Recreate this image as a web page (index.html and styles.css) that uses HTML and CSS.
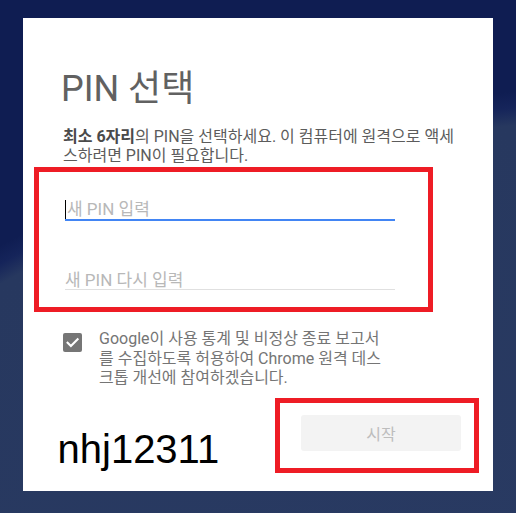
FILE: index.html
```html
<!DOCTYPE html>
<html lang="ko">
<head>
<meta charset="utf-8">
<title>PIN 선택</title>
<link rel="stylesheet" href="styles.css">
</head>
<body>
  <main class="card">
    <h1 class="title">PIN 선택</h1>
    <p class="desc"><b>최소 6자리</b>의 PIN을 선택하세요. 이 컴퓨터에 원격으로 액세스하려면 PIN이 필요합니다.</p>
    <div class="fields">
      <div class="field field-focused"><span class="caret"></span><span class="placeholder">새 PIN 입력</span></div>
      <div class="field"><span class="placeholder">새 PIN 다시 입력</span></div>
    </div>
    <label class="consent">
      <span class="checkbox">
        <svg viewBox="0 0 19 19" width="19" height="19" aria-hidden="true"><path d="M4.6 9.8 L7.9 13 L14.6 6.2" fill="none" stroke="#fff" stroke-width="2.1" stroke-linecap="square"/></svg>
      </span>
      <span class="consent-text">Google이 사용 통계 및 비정상 종료 보고서를 수집하도록 허용하여 Chrome 원격 데스크톱 개선에 참여하겠습니다.</span>
    </label>
    <div class="footer">
      <div class="pin-note">nhj12311</div>
      <button class="start" type="button">시작</button>
    </div>
  </main>
  <div class="mark mark-fields"></div>
  <div class="mark mark-button"></div>
</body>
</html>
```
FILE: styles.css
```css
html, body {
  margin: 0;
  padding: 0;
}
body {
  width: 516px;
  height: 513px;
  overflow: hidden;
  position: relative;
  font-family: Roboto, "Noto Sans CJK KR", sans-serif;
  background-color: #0f1d52;
  background-image: radial-gradient(circle 1278px at 622px 1387px, #2c3e68 0px, #27385f 1266px, #15245a 1284px, #0f1d52 1300px);
}
.card {
  box-sizing: border-box;
  width: 470px;
  height: 473px;
  margin: 18px 0 0 23px;
  padding: 49px 32px 0 40px;
  background: #fff;
  display: flex;
  flex-direction: column;
}
.title {
  margin: 0 0 0 -2px;
  font-size: 36px;
  line-height: 44px;
  font-weight: 400;
  color: #616161;
}
.desc {
  margin: 16px -6px 0 0;
  font-size: 16px;
  line-height: 19px;
  color: #5c5c5c;
}
.desc b {
  font-weight: 700;
  color: #4a4a4a;
}
.fields {
  margin: 34.5px 0 0 2px;
  width: 330px;
  display: flex;
  flex-direction: column;
  gap: 50px;
}
.field {
  font-size: 17px;
  line-height: 18px;
  border-bottom: 1px solid #e0e0e0;
  display: flex;
  align-items: center;
}
.field-focused {
  border-bottom: 2px solid #4285f4;
}
.caret {
  width: 1px;
  height: 19px;
  background: #000;
  margin-right: 1px;
}
.placeholder {
  color: #b8b8b8;
}
.consent {
  margin-top: 39.5px;
  display: flex;
  align-items: flex-start;
  gap: 17px;
}
.checkbox {
  flex: none;
  width: 19px;
  height: 19px;
  margin-top: 4px;
  border-radius: 2px;
  background: #767676;
  display: flex;
}
.consent-text {
  width: 290px;
  font-size: 16px;
  line-height: 19.5px;
  color: #757575;
}
.footer {
  margin-top: 27px;
  display: flex;
  justify-content: space-between;
  align-items: flex-start;
}
.pin-note {
  margin: 11px 0 0 -5.5px;
  font-family: "Liberation Sans", Arial, sans-serif;
  font-size: 40px;
  line-height: 46px;
  color: #000;
}
.start {
  width: 160px;
  height: 36px;
  border: none;
  border-radius: 3px;
  background: #f3f3f3;
  color: #bdbdbd;
  font-family: Roboto, "Noto Sans CJK KR", sans-serif;
  font-size: 16px;
  padding: 0;
}
.mark {
  position: absolute;
  box-sizing: border-box;
  border: 5px solid #ee1c25;
}
.mark-fields {
  left: 34px;
  top: 167px;
  width: 399px;
  height: 145px;
}
.mark-button {
  left: 275px;
  top: 398px;
  width: 204px;
  height: 75px;
}
```
